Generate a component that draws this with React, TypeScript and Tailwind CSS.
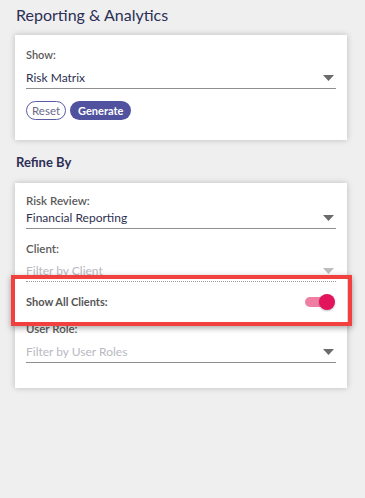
import React from "react";

function Caret({ light = false }: { light?: boolean }) {
  return (
    <svg width="11" height="6" viewBox="0 0 11 6" className="shrink-0">
      <path d="M0 0 L11 0 L5.5 6 Z" fill={light ? "#bdbdbd" : "#6b6b6b"} />
    </svg>
  );
}

function Select({
  value,
  placeholder = false,
  dotted = false,
}: {
  value: string;
  placeholder?: boolean;
  dotted?: boolean;
}) {
  return (
    <div
      className={
        "flex items-center justify-between h-[21px] pr-[2px] " +
        (dotted
          ? "border-b border-dotted border-[#9a9a9a]"
          : "border-b border-[#8f8f8f]")
      }
    >
      <span
        className={
          "text-[12px] leading-[20px] " +
          (placeholder ? "text-[#b9b9bf]" : "text-[#2e3050]")
        }
      >
        {value}
      </span>
      <Caret light={placeholder && dotted} />
    </div>
  );
}

export default function App() {
  return (
    <div
      className="relative w-[365px] min-h-[498px] bg-[#efefef] pt-[4px]"
      style={{ fontFamily: "Lato, 'Noto Sans', sans-serif" }}
    >
      <h1 className="ml-4 text-[16px] leading-[22px] text-[#2c2e55]">
        Reporting &amp; Analytics
      </h1>

      <div className="ml-[15px] mr-[18px] mt-[9px] bg-white shadow-[0_0_6px_rgba(0,0,0,0.22)] px-[11px] pt-[12px] pb-[20px]">
        <div className="text-[11px] leading-[16px] text-[#5a5a5a] font-semibold">
          Show:
        </div>
        <div className="mt-[5px]">
          <Select value="Risk Matrix" />
        </div>
        <div className="flex gap-[4px] mt-[12px]">
          <button className="h-[19px] px-[5px] rounded-full border border-[#5a5ba6] bg-white text-[11.5px] leading-[17px] text-[#6a6a8a]">
            Reset
          </button>
          <button className="h-[19px] px-[8px] rounded-full bg-[#50519f] text-[11px] leading-[19px] font-bold text-white">
            Generate
          </button>
        </div>
      </div>

      <h2 className="ml-4 mt-[12px] text-[13px] leading-[20px] font-bold text-[#2c2e55]">
        Refine By
      </h2>

      <div className="ml-[15px] mr-[18px] mt-[11px] bg-white shadow-[0_0_6px_rgba(0,0,0,0.22)] px-[11px] pt-[11px] pb-[25px]">
        <div className="text-[11.5px] leading-[14px] text-[#5a5a5a] font-semibold">
          Risk Review:
        </div>
        <div className="mt-[0px]">
          <Select value="Financial Reporting" />
        </div>
        <div className="mt-[13px] text-[11.5px] leading-[14px] text-[#5a5a5a] font-semibold">
          Client:
        </div>
        <div className="mt-[5px]">
          <Select value="Filter by Client" placeholder dotted />
        </div>
        <div className="flex items-center justify-between h-[40px] pr-[1px]">
          <span className="text-[11px] font-bold text-[#555]">
            Show All Clients:
          </span>
          <div className="relative w-[30px] h-[16px] flex items-center">
            <div className="w-[24px] h-[10px] rounded-full bg-[#f07ea3]" />
            <div className="absolute right-0 top-0 w-[16px] h-[16px] rounded-full bg-[#e2155c] shadow-[0_1px_2px_rgba(0,0,0,0.25)]" />
          </div>
        </div>
        <div className="text-[11.5px] leading-[14px] text-[#5a5a5a] font-semibold">
          User Role:
        </div>
        <div className="mt-[6px]">
          <Select value="Filter by User Roles" placeholder />
        </div>
      </div>

      <div className="absolute left-[11px] top-[275px] w-[341px] h-[51px] border-[4px] border-[#f2403f] shadow-[0_2px_6px_rgba(0,0,0,0.35)]" />
    </div>
  );
}
